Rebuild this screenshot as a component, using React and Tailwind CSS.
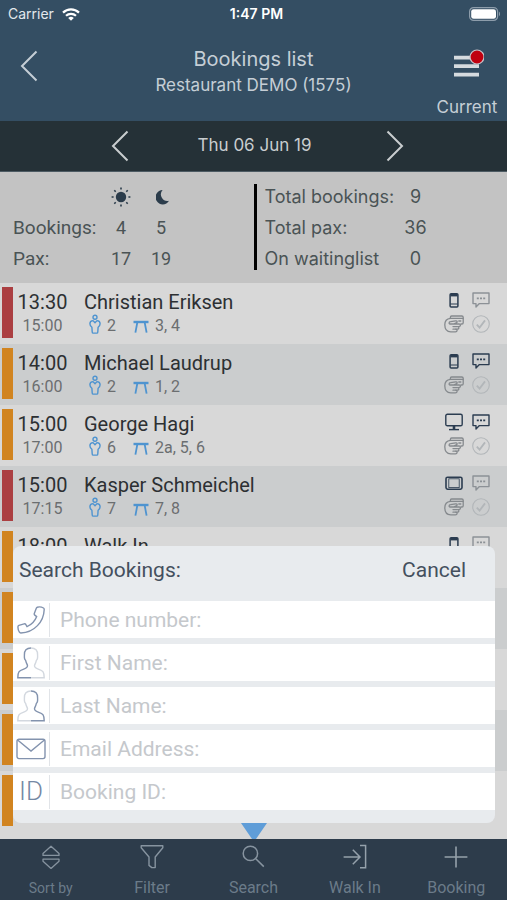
import { useState } from 'react'

const BOOKINGS = [
  { start: '13:30', end: '15:00', name: 'Christian Eriksen', pax: '2', tables: '3, 4', device: 'phone', seated: true, note: false },
  { start: '14:00', end: '16:00', name: 'Michael Laudrup', pax: '2', tables: '1, 2', device: 'phone', seated: false, note: true },
  { start: '15:00', end: '17:00', name: 'George Hagi', pax: '6', tables: '2a, 5, 6', device: 'desktop', seated: false, note: true },
  { start: '15:00', end: '17:15', name: 'Kasper Schmeichel', pax: '7', tables: '7, 8', device: 'tablet', seated: true, note: false },
  { start: '18:00', name: 'Walk In', device: 'phone', seated: false, note: false },
  {},
  {},
  {},
  {},
]

const FIELDS = [
  { id: 'phone', label: 'Phone number:', type: 'tel', icon: <HandsetIcon /> },
  { id: 'first', label: 'First Name:', type: 'text', icon: <PersonIcon side="left" /> },
  { id: 'last', label: 'Last Name:', type: 'text', icon: <PersonIcon side="right" /> },
  { id: 'email', label: 'Email Address:', type: 'email', icon: <EnvelopeIcon /> },
  { id: 'booking', label: 'Booking ID:', type: 'text', icon: <span className="text-[26px] font-light text-[#7488a4]">ID</span> },
]

const TABS = [
  { label: 'Sort by', icon: <SortIcon />, small: true },
  { label: 'Filter', icon: <FilterIcon /> },
  { label: 'Search', icon: <SearchIcon /> },
  { label: 'Walk In', icon: <WalkInIcon /> },
  { label: 'Booking', icon: <PlusIcon /> },
]

function Chevron({ right }) {
  return (
    <svg width="18" height="32" viewBox="0 0 18 32" fill="none" stroke="currentColor" strokeWidth="2">
      <path d={right ? 'M1.5 1.5 16 16 1.5 30.5' : 'M16.5 1.5 2 16l14.5 14.5'} />
    </svg>
  )
}

function WifiIcon() {
  return (
    <svg width="18" height="13" viewBox="0 0 18 13" fill="none" stroke="#fff" strokeWidth="2.2">
      <path d="M1 4.6a11.4 11.4 0 0 1 16 0" />
      <path d="M4 7.8a7.2 7.2 0 0 1 10 0" />
      <path d="M9 12.8 6.2 10a4 4 0 0 1 5.6 0z" fill="#fff" stroke="none" />
    </svg>
  )
}

function BatteryIcon() {
  return (
    <svg width="32" height="14" viewBox="0 0 32 14">
      <rect x="0.6" y="0.6" width="28" height="12.8" rx="4" fill="none" stroke="#8d9dab" strokeWidth="1.2" />
      <rect x="2.2" y="2.2" width="24.8" height="9.6" rx="2.4" fill="#fff" />
      <path d="M30 4.8c1.3.5 1.3 3.9 0 4.4z" fill="#8d9dab" />
    </svg>
  )
}

function MenuIcon() {
  return (
    <svg width="34" height="30" viewBox="0 0 34 30">
      <path d="M4 8.6h25M4 17.1h25M4 25.6h25" stroke="#d6dbdf" strokeWidth="3.6" />
      <circle cx="27" cy="8" r="7" fill="#c0000f" stroke="#c9c3c9" strokeWidth="1.2" />
    </svg>
  )
}

function SunIcon() {
  return (
    <svg width="20" height="20" viewBox="0 0 20 20" className="mx-auto" stroke="#2b3c4b" strokeWidth="1.6">
      <circle cx="10" cy="10" r="5.2" fill="#2b3c4b" stroke="none" />
      <path d="M10 .6v2M10 17.400v2M.6 10h2M17.400 10h2M3.300 3.300l1.400 1.400M15.300 15.300l1.400 1.400M3.300 16.700l1.400-1.400M15.300 4.700l1.400-1.400" />
    </svg>
  )
}

function MoonIcon() {
  return (
    <svg width="14" height="16" viewBox="0 0 14 16" className="ml-[15px]">
      <path d="M6.600 1A7.200 7.200 0 1 0 13 11.800 6.600 6.600 0 0 1 6.600 1z" fill="#2b3c4b" />
    </svg>
  )
}

function GuestIcon() {
  return (
    <svg width="12" height="20" viewBox="0 0 12 20" fill="none" stroke="#4f94d0" strokeWidth="1.4" strokeLinejoin="round">
      <circle cx="6" cy="3.2" r="2" />
      <path d="M6 8.800 4 6.600C2.200 6.600.9 7.900.9 9.800c0 1.500.9 2.600 2 3.400l.3 4.700c0 .8.5 1.200 1.200 1.200h3.200c.7 0 1.200-.4 1.200-1.200l.3-4.700c1.100-.8 2-1.900 2-3.400 0-1.900-1.300-3.200-3.100-3.200z" />
    </svg>
  )
}

function TableIcon() {
  return (
    <svg width="16" height="13" viewBox="0 0 16 13" fill="none" stroke="#4f94d0">
      <path d="M.5 2h15" strokeWidth="2.4" />
      <path d="M4.400 2 2.400 12.600M11.600 2l2 10.600" strokeWidth="1.8" />
    </svg>
  )
}

function DeviceIcon({ type }) {
  if (type === 'desktop') {
    return (
      <svg width="18" height="18" viewBox="0 0 18 18" fill="none" stroke="#2b3c50" strokeWidth="1.4">
        <rect x="0.8" y="1.2" width="16.4" height="11.6" rx="1.6" />
        <path d="M9 13v3.4" strokeWidth="2.6" />
        <path d="M4 16.6h10" />
      </svg>
    )
  }
  if (type === 'tablet') {
    return (
      <svg width="18" height="18" viewBox="0 0 18 18" fill="none" stroke="#2b3c50">
        <rect x="1" y="3.2" width="16" height="12" rx="1.6" strokeWidth="1.6" />
        <rect x="3.8" y="4.8" width="10.4" height="8.8" strokeWidth="0.8" />
      </svg>
    )
  }
  return (
    <svg width="18" height="18" viewBox="0 0 18 18" fill="none" stroke="#2b3c50">
      <rect x="5.1" y="2.8" width="7.8" height="13.2" rx="1" strokeWidth="1.5" />
      <path d="M5.4 4.2h7.200" strokeWidth="2.4" />
      <path d="M5.4 13h7.200" strokeWidth="1" />
    </svg>
  )
}

function ChatIcon({ active }) {
  return (
    <svg width="18" height="18" viewBox="0 0 18 18" fill="none" stroke={active ? '#2b3c50' : '#8c9196'} strokeWidth="1.4">
      <path d="M1 2h16v10.600H7.400L4 16v-3.400H1z" strokeLinejoin="round" />
      <path d="M4.800 7.400h2M8 7.400h2M11.200 7.400h2" strokeWidth="1.9" />
    </svg>
  )
}

function CardIcon() {
  return (
    <svg width="20" height="18" viewBox="0 0 20 18" fill="none" stroke="#85898d" strokeWidth="1.3" strokeLinejoin="round" strokeLinecap="round">
      <path d="M6.400 3V2.200C6.400 1.400 6.900 1 7.600 1h10.200c.8 0 1.400.5 1.400 1.300v5.400c0 .8-.5 1.300-1.300 1.300h-1" />
      <path d="M6.600 3.400h12.400M14.800 6h2" />
      <path d="M6.400 3.400C3 3.800.8 6 .8 9.800c0 4.400 2.200 7 6 7h4.600c2.200 0 2.200-2.600.4-2.600h1.400c2.200 0 2.200-2.600.4-2.600h1c2.400 0 2.400-2.600.4-2.600H6.600C4.600 9 4.600 6.800 6.600 6.600l5-.8c2-.2 2 1.600.6 2L9.600 9" />
      <path d="M9 11.600h4M9 14.200h3" />
    </svg>
  )
}

function CheckIcon() {
  return (
    <svg width="18" height="18" viewBox="0 0 18 18" fill="none" stroke="#b2b6b9">
      <circle cx="9" cy="9" r="8.3" strokeWidth="1.1" />
      <path d="m4.800 9.600 2.800 3L13 5.400" strokeWidth="1.8" />
    </svg>
  )
}

function HandsetIcon() {
  return (
    <svg width="28" height="28" viewBox="0 0 28 28" fill="none" stroke="#8393ae" strokeWidth="1.4" strokeLinejoin="round">
      <path d="M20.200 1.200c2.200-.6 4.400-.3 6.300.8.500.3.700.8.700 1.400C26.800 15.600 17.400 26.600 3.800 27c-.6 0-1.100-.3-1.400-.8C1.300 24.500.8 22.600 1 20.600c0-.6.4-1 .9-1.200l5.200-1.500c.7-.2 1.300 0 1.700.6l1.200 2.200c4.300-1.800 8-5.700 9.700-10.100l-1.900-1.500c-.5-.4-.7-1-.5-1.700l2.100-5.300c.2-.4.4-.8.8-.9z" />
    </svg>
  )
}

function PersonIcon({ side }) {
  const dark = '#8393ae'
  const faint = '#d3d8df'
  return (
    <svg width="28" height="32" viewBox="0 0 28 32" fill="none" strokeWidth="1.4">
      <path d="M14 1C9.500 1 7.200 3.600 7.400 8c.1 1.800-.3 2.300.3 3.900.4 1 .9 1.300 1.200 2.400.4 1.800 1.400 3.200 1.600 4.300.2 2-1.100 2.600-4.300 3.700C2 23.700.8 25.200.8 30.800H14" stroke={side === 'left' ? dark : faint} />
      <path d="M14 1c4.500 0 6.800 2.600 6.600 7-.1 1.800.3 2.300-.3 3.900-.4 1-.9 1.300-1.200 2.400-.4 1.800-1.400 3.200-1.600 4.300-.2 2 1.100 2.600 4.300 3.700 4.200 1.400 5.400 2.900 5.400 8.500H14" stroke={side === 'right' ? dark : faint} />
    </svg>
  )
}

function EnvelopeIcon() {
  return (
    <svg width="30" height="22" viewBox="0 0 30 22" fill="none" stroke="#8393ae" strokeWidth="1.4">
      <rect x="1" y="1.2" width="28" height="19.4" rx="2" />
      <path d="m1.600 2 13.400 11L28.400 2" />
    </svg>
  )
}

function SortIcon() {
  return (
    <svg width="24" height="26" viewBox="0 0 24 26" fill="none" stroke="#8794a0" strokeWidth="1.3" strokeLinejoin="round">
      <path d="M12 2.200 20 9.400v2H4v-2zM12 24.400l8-7.200v-2H4v2z" />
    </svg>
  )
}

function FilterIcon() {
  return (
    <svg width="24" height="26" viewBox="0 0 24 26" fill="none" stroke="#8794a0" strokeWidth="1.4" strokeLinejoin="round">
      <path d="M1.200 1.800h21.600v2L15.200 13v10.600h-3.400L9 21.400V13L1.200 3.800z" />
    </svg>
  )
}

function SearchIcon() {
  return (
    <svg width="24" height="26" viewBox="0 0 24 26" fill="none" stroke="#8794a0" strokeWidth="1.5">
      <circle cx="9.400" cy="9.400" r="7.200" />
      <path d="m14.800 14.800 8 7.800" />
    </svg>
  )
}

function WalkInIcon() {
  return (
    <svg width="24" height="26" viewBox="0 0 24 26" fill="none" stroke="#95a1ab" strokeWidth="1.5">
      <path d="M.6 13h16M9.800 5.800l7.200 7.200-7.200 7.200M17 1.600h5.600v22.200H17" />
    </svg>
  )
}

function PlusIcon() {
  return (
    <svg width="24" height="26" viewBox="0 0 24 26" fill="none" stroke="#95a1ab" strokeWidth="1.6">
      <path d="M12 2.400v21.200M.6 13h22.800" />
    </svg>
  )
}

function BookingRow({ booking }) {
  return (
    <li className="flex h-[61px] pl-0.5 odd:bg-[#d8d8d8] even:bg-[#cbcdce]">
      <div className={`mt-1 h-[51px] w-[11px] shrink-0 ${booking.seated ? 'bg-[#ab3f42]' : 'bg-[#d18420]'}`} />
      {booking.name && (
        <>
          <div className="w-[59px] pt-[7px] text-center">
            <p className="text-xl leading-6 text-[#2d3033]">{booking.start}</p>
            <p className="text-base leading-6 text-[#6b6e70]">{booking.end}</p>
          </div>
          <div className="flex-1 pt-[7px] pl-3">
            <p className="text-xl leading-6 text-[#2d3033]">{booking.name}</p>
            {booking.pax && (
              <p className="flex items-center pl-[5px] text-base leading-6 text-[#6b6e70]">
                <span className="mr-1.5 -mt-1"><GuestIcon /></span>
                <span className="w-[26px]">{booking.pax}</span>
                <span className="mr-1.5"><TableIcon /></span>
                {booking.tables}
              </p>
            )}
          </div>
          <div className="mr-[17px] grid w-[46px] grid-cols-[20px_18px] content-start items-center justify-between gap-y-1.5 pt-2">
            <span className="flex justify-center"><DeviceIcon type={booking.device} /></span>
            <ChatIcon active={booking.note} />
            <CardIcon />
            <CheckIcon />
          </div>
        </>
      )}
    </li>
  )
}

function SearchPanel({ onCancel }) {
  return (
    <form className="absolute right-3 bottom-4 left-[13px] rounded-lg bg-[#e8ebee] pb-[13px]" onSubmit={e => e.preventDefault()}>
      <div className="flex h-[55px] items-start justify-between pt-2.5 pr-[29px] pl-1.5 text-[21px] leading-7 text-[#44505e]">
        <h2>Search Bookings:</h2>
        <button type="button" onClick={onCancel}>Cancel</button>
      </div>
      <div className="flex flex-col gap-1.5">
        {FIELDS.map(f => (
          <div key={f.id} className="flex h-[37px] items-center bg-white">
            <label htmlFor={f.id} aria-label={f.label} className="flex h-[34px] w-[37px] shrink-0 items-center justify-center border-r border-[#e1e4e8]">
              {f.icon}
            </label>
            <input
              id={f.id}
              type={f.type}
              placeholder={f.label}
              className="min-w-0 flex-1 px-2.5 text-[21px] leading-7 text-[#44505e] placeholder-[#c5c8cc] outline-none"
            />
          </div>
        ))}
      </div>
      {/* pointer down to the Search tab */}
      <svg width="26" height="16" viewBox="0 0 26 16" className="absolute top-full left-1/2 -translate-x-1/2">
        <path d="M0 0h26L15 16h-4z" fill="#5f9dd8" />
      </svg>
    </form>
  )
}

export default function App() {
  const [searching, setSearching] = useState(true)

  return (
    <div className="flex min-h-screen flex-col bg-[#d8d8d8] font-['Roboto',sans-serif]">
      <header className="bg-[#344e63] font-['Inter',sans-serif] text-[#c5ced6]">
        <div className="grid h-7 grid-cols-3 items-center pr-1.5 pl-2 text-sm text-white">
          <span className="flex items-center gap-2 text-[#e3e8ec]">Carrier <WifiIcon /></span>
          <span className="pl-1 text-center font-semibold">1:47 PM</span>
          <span className="flex justify-end"><BatteryIcon /></span>
        </div>
        <div className="grid h-[93px] grid-cols-[80px_1fr_80px]">
          <button aria-label="Back" className="flex items-start pt-[22px] pl-5"><Chevron /></button>
          <div className="pt-[18px] text-center">
            <h1 className="text-xl leading-[26px]">Bookings list</h1>
            <p className="text-[17px] leading-[26px]">Restaurant DEMO (1575)</p>
          </div>
          <button className="flex flex-col items-center pt-[21px] text-[17px]">
            <MenuIcon />
            <span className="mt-4">Current</span>
          </button>
        </div>
      </header>

      <nav className="flex h-[51px] items-center justify-center border-b border-[#4d5b63] bg-[#253137] pl-2 font-['Inter',sans-serif] text-[#c9cdcf]">
        <div className="flex w-[293px] items-center justify-between">
          <button aria-label="Previous day"><Chevron /></button>
          <span className="pr-1.5 text-[17px]">Thu 06 Jun 19</span>
          <button aria-label="Next day"><Chevron right /></button>
        </div>
      </nav>

      <section className="grid h-[111px] grid-cols-2 bg-[#c3c3c3] pt-[9px] text-lg text-[#4a5355]">
        <table className="ml-[13px] self-start">
          <thead>
            <tr className="h-[31px]">
              <td className="w-[88px]" />
              <th className="w-10"><SunIcon /></th>
              <th className="w-10"><MoonIcon /></th>
              <td />
            </tr>
          </thead>
          <tbody className="text-center">
            <tr className="h-[31px]">
              <th className="text-left text-[19px] font-normal">Bookings:</th>
              <td>4</td>
              <td>5</td>
            </tr>
            <tr className="h-[31px]">
              <th className="text-left text-[19px] font-normal">Pax:</th>
              <td>17</td>
              <td>19</td>
            </tr>
          </tbody>
        </table>
        <div className="mt-[3px] h-[86px] border-l-3 border-black pl-2">
          <table className="-mt-[3px] font-['Inter',sans-serif]">
            <tbody>
              <tr className="h-[31px]"><th className="w-[131px] text-left font-normal">Total bookings:</th><td className="w-10 text-center">9</td></tr>
              <tr className="h-[31px]"><th className="text-left font-normal">Total pax:</th><td className="text-center">36</td></tr>
              <tr className="h-[31px]"><th className="text-left font-normal">On waitinglist</th><td className="text-center">0</td></tr>
            </tbody>
          </table>
        </div>
      </section>

      <main className="relative flex-1">
        <ul>
          {BOOKINGS.map((b, i) => <BookingRow key={i} booking={b} />)}
        </ul>
        {searching && <SearchPanel onCancel={() => setSearching(false)} />}
      </main>

      <footer className="grid h-[61px] grid-cols-5 bg-[#2d3c4b] text-[#6b7b89]">
        {TABS.map(t => (
          <button
            key={t.label}
            onClick={() => t.label === 'Search' && setSearching(true)}
            className="flex flex-col items-center pt-[5px]"
          >
            {t.icon}
            <span className={`mt-1.5 leading-6 ${t.small ? 'text-sm' : 'text-base'}`}>{t.label}</span>
          </button>
        ))}
      </footer>
    </div>
  )
}
